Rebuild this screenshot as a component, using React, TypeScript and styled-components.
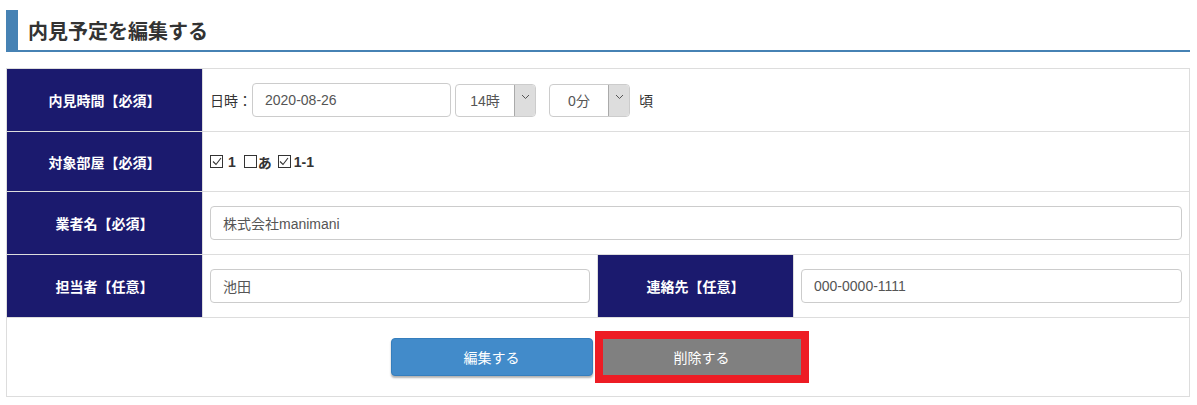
import React from "react";
import styled, { createGlobalStyle } from "styled-components";

const Global = createGlobalStyle`
  html, body { margin: 0; padding: 0; background: #fff; }
  body { font-family: "Liberation Sans", "Noto Sans CJK JP", sans-serif; color: #333; }
  * { box-sizing: border-box; }
`;

const Page = styled.div`
  padding: 10px 7px 0 6px;
  width: 1197px;
`;

const Heading = styled.h2`
  margin: 0;
  height: 42px;
  display: flex;
  align-items: center;
  border-left: 12px solid #4682b4;
  border-bottom: 2px solid #4682b4;
  padding-left: 10px;
  font-family: "Noto Sans CJK JP", sans-serif;
  font-size: 20px;
  font-weight: bold;
  color: #333;
`;

const Table = styled.table`
  margin-top: 16px;
  width: 1184px;
  border-collapse: collapse;
  table-layout: fixed;
  border: 1px solid #ddd;
`;

const Row = styled.tr<{ $h: number }>`
  height: ${(p) => p.$h}px;
`;

const Label = styled.th`
  width: 196px;
  background: #1b1a6e;
  color: #fff;
  font-size: 14px;
  font-weight: bold;
  text-align: center;
  border: 1px solid #ddd;
  padding: 0;
`;

const Cell = styled.td`
  border: 1px solid #ddd;
  padding: 0 7px;
  font-size: 14px;
  vertical-align: middle;
`;

const Inline = styled.div`
  display: flex;
  align-items: center;
`;

const Prefix = styled.span`
  width: 42px;
  flex: none;
`;

const Input = styled.div<{ $w?: number }>`
  height: 34px;
  width: ${(p) => (p.$w ? `${p.$w}px` : "100%")};
  border: 1px solid #ccc;
  border-radius: 4px;
  display: flex;
  align-items: center;
  padding-left: 12px;
  font-size: 14px;
  color: #555;
  background: #fff;
`;

const Select = styled.div<{ $ml: number }>`
  margin-left: ${(p) => p.$ml}px;
  width: 81px;
  height: 33px;
  border: 1px solid #ccc;
  border-radius: 4px;
  display: flex;
  overflow: hidden;
  font-size: 14px;
  color: #555;
`;

const SelectText = styled.div`
  flex: 1;
  display: flex;
  align-items: center;
  justify-content: center;
`;

const Arrow = styled.div`
  width: 21px;
  background: #ddd;
  border-left: 1px solid #aaa;
  display: flex;
  align-items: center;
  justify-content: center;
  padding-bottom: 6px;
`;

const Suffix = styled.span`
  margin-left: 9px;
`;

const Checks = styled.div`
  display: flex;
  align-items: center;
  font-size: 14px;
  font-weight: bold;
  color: #333;
`;

const Box = styled.span<{ $ml: number }>`
  margin-left: ${(p) => p.$ml}px;
  width: 13px;
  height: 13px;
  border: 1px solid #333;
  display: inline-flex;
  align-items: center;
  justify-content: center;
  background: #fff;
`;

const CheckText = styled.span<{ $ml: number }>`
  margin-left: ${(p) => p.$ml}px;
`;

const ButtonRow = styled.div`
  display: flex;
  justify-content: center;
  align-items: center;
  padding-left: 3px;
`;

const EditButton = styled.div`
  width: 202px;
  height: 38px;
  background: #428bca;
  border: 1px solid #357ebd;
  border-radius: 4px;
  box-shadow: 0 2px 2px rgba(0, 0, 0, 0.3);
  color: #fff;
  font-size: 14px;
  display: flex;
  align-items: center;
  justify-content: center;
`;

const Highlight = styled.div`
  margin-left: 2px;
  border: 8px solid #ed1c24;
  width: 214px;
  height: 52px;
`;

const DeleteButton = styled.div`
  width: 100%;
  height: 100%;
  background: #808080;
  color: #fff;
  font-size: 14px;
  display: flex;
  align-items: center;
  justify-content: center;
`;

const Check = () => (
  <svg width="10" height="9" viewBox="0 0 10 9">
    <path d="M1 4.5 L4 7.5 L9 1" fill="none" stroke="#333" strokeWidth="1.1" />
  </svg>
);

const Chevron = () => (
  <svg width="9" height="6" viewBox="0 0 9 6">
    <path d="M1 1 L4.5 4.5 L8 1" fill="none" stroke="#555" strokeWidth="1" />
  </svg>
);

export default function App() {
  return (
    <>
      <Global />
      <Page>
        <Heading>内見予定を編集する</Heading>
        <Table>
          <colgroup>
            <col style={{ width: 196 }} />
            <col style={{ width: 395 }} />
            <col style={{ width: 196 }} />
            <col style={{ width: 396 }} />
          </colgroup>
          <tbody>
            <Row $h={63}>
              <Label>内見時間【必須】</Label>
              <Cell colSpan={3}>
                <Inline>
                  <Prefix>日時：</Prefix>
                  <Input $w={199}>2020-08-26</Input>
                  <Select $ml={4}>
                    <SelectText>14時</SelectText>
                    <Arrow>
                      <Chevron />
                    </Arrow>
                  </Select>
                  <Select $ml={13}>
                    <SelectText>0分</SelectText>
                    <Arrow>
                      <Chevron />
                    </Arrow>
                  </Select>
                  <Suffix>頃</Suffix>
                </Inline>
              </Cell>
            </Row>
            <Row $h={60}>
              <Label>対象部屋【必須】</Label>
              <Cell colSpan={3}>
                <Checks>
                  <Box $ml={0}>
                    <Check />
                  </Box>
                  <CheckText $ml={5}>1</CheckText>
                  <Box $ml={8} />
                  <CheckText $ml={1}>あ</CheckText>
                  <Box $ml={6}>
                    <Check />
                  </Box>
                  <CheckText $ml={3}>1-1</CheckText>
                </Checks>
              </Cell>
            </Row>
            <Row $h={63}>
              <Label>業者名【必須】</Label>
              <Cell colSpan={3}>
                <Input>株式会社manimani</Input>
              </Cell>
            </Row>
            <Row $h={63}>
              <Label>担当者【任意】</Label>
              <Cell>
                <Input>池田</Input>
              </Cell>
              <Label>連絡先【任意】</Label>
              <Cell>
                <Input>000-0000-1111</Input>
              </Cell>
            </Row>
            <Row $h={79}>
              <Cell colSpan={4}>
                <ButtonRow>
                  <EditButton>編集する</EditButton>
                  <Highlight>
                    <DeleteButton>削除する</DeleteButton>
                  </Highlight>
                </ButtonRow>
              </Cell>
            </Row>
          </tbody>
        </Table>
      </Page>
    </>
  );
}
